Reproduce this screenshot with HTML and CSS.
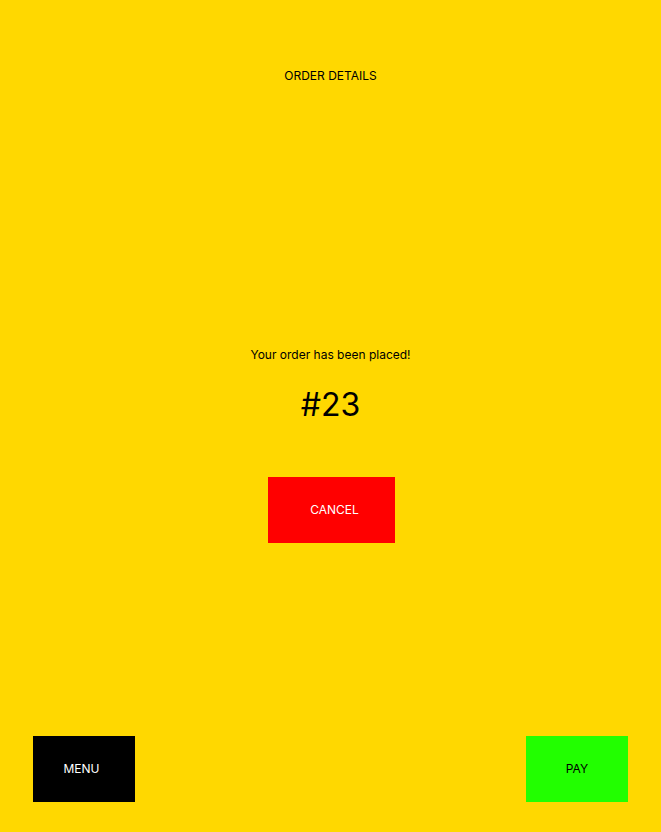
FILE: index.html
```html
<!DOCTYPE html>
<html>
<head>
<meta charset="utf-8">
<link rel="stylesheet" href="styles.css">
</head>
<body>
<div class="page">
  <header class="title">ORDER DETAILS</header>
  <main class="center">
    <p class="message">Your order has been placed!</p>
    <p class="number">#23</p>
    <button class="btn cancel">CANCEL</button>
  </main>
  <footer class="footer">
    <button class="btn menu">MENU</button>
    <button class="btn pay">PAY</button>
  </footer>
</div>
</body>
</html>
```

FILE: styles.css
```css
* { box-sizing: border-box; }
html, body { margin: 0; padding: 0; }
body {
  background: #FFD800;
  font-family: Inter, "Noto Sans", sans-serif;
  color: #000;
}
.page {
  height: 832px;
  display: flex;
  flex-direction: column;
  padding: 68px 33px 30px;
}
.title {
  font-size: 12px;
  line-height: 15px;
  text-align: center;
}
.center {
  display: flex;
  flex-direction: column;
  align-items: center;
  margin-top: 264px;
}
.message {
  margin: 0;
  font-size: 12px;
  line-height: 15px;
}
.number {
  margin: 23px 0 0;
  font-size: 32px;
  line-height: 39px;
}
.btn {
  border: none;
  font-family: Inter, "Noto Sans", sans-serif;
  font-size: 12px;
  height: 66px;
  padding: 0 0 2px;
  cursor: pointer;
}
.cancel {
  margin-top: 53px;
  margin-left: 2px;
  width: 127px;
  background: #FF0000;
  color: #fff;
  padding-left: 6px;
}
.footer {
  margin-top: auto;
  display: flex;
  justify-content: space-between;
}
.menu {
  width: 102px;
  background: #000;
  color: #fff;
  padding-right: 5px;
}
.pay {
  width: 102px;
  background: #22FF00;
  color: #000;
}
```
